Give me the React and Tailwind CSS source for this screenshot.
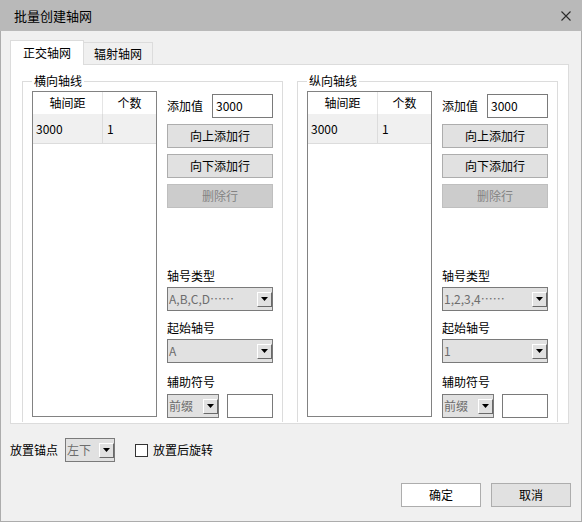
import React from "react";

function DropArrow() {
  return (
    <span className="flex h-[15px] w-[15px] shrink-0 items-center justify-center border border-t-white border-l-white border-r-[#696969] border-b-[#696969] bg-[#e1e1e1]">
      <svg width="7" height="4" viewBox="0 0 7 4">
        <path d="M0 0h7L3.5 4z" fill="#000" />
      </svg>
    </span>
  );
}

function Combo({ value, className = "" }) {
  return (
    <div className={`flex h-[24px] items-center justify-between border border-[#7a7a7a] bg-[#e1e1e1] pl-px ${className}`}>
      <span className="leading-[16px] text-[#6d6d6d]">{value}</span>
      <DropArrow />
    </div>
  );
}

function Btn({ children, disabled }) {
  if (disabled) {
    return (
      <div className="flex h-[24px] items-center justify-center border border-[#bfbfbf] bg-[#cccccc] text-[#838383]">
        {children}
      </div>
    );
  }
  return (
    <div className="flex h-[24px] items-center justify-center border border-[#adadad] bg-[#e1e1e1]">
      {children}
    </div>
  );
}

// series label: e.g. "A,B,C,D" followed by a centred full-width ellipsis
function Series({ text }) {
  return (
    <>
      {text}
      <span lang="zh-CN" className="inline-block [font-feature-settings:'fwid']">……</span>
    </>
  );
}

function AxisGroup({ title, typeValue, startValue }) {
  return (
    <div className="relative h-[341px] w-[261px] border-l border-r border-t border-[#dcdcdc]">
      <span className="absolute -top-[9px] left-[9px] bg-white px-[2px] leading-[16px]">{title}</span>
      <div className="ml-[9px] mt-[9px] flex">
        {/* list */}
        <div className="h-[326px] w-[125px] border border-[#828282] bg-white">
          <div className="flex h-[22px] items-center">
            <div className="flex h-full w-[70px] items-center justify-center border-r border-[#e5e5e5]">轴间距</div>
            <div className="flex-1 text-center">个数</div>
          </div>
          <div className="flex h-[30px] items-center border-b border-[#dcdcdc] bg-[#f0f0f0]">
            <div className="flex h-full w-[70px] items-center border-r border-[#dcdcdc] pl-[3px]">3000</div>
            <div className="pl-[4px]">1</div>
          </div>
        </div>

        <div className="ml-[10px] flex w-[106px] flex-col">
          <div className="mt-[3px] flex h-[24px] items-center justify-between">
            <span>添加值</span>
            <div className="flex h-[24px] w-[61px] items-center border border-[#7a7a7a] bg-white pl-[3px]">3000</div>
          </div>
          <div className="mt-[6px]">
            <Btn>向上添加行</Btn>
          </div>
          <div className="mt-[6px]">
            <Btn>向下添加行</Btn>
          </div>
          <div className="mt-[6px]">
            <Btn disabled>删除行</Btn>
          </div>

          <div className="mt-[60px] leading-[16px]">轴号类型</div>
          <Combo value={typeValue} className="mt-[3px]" />
          <div className="mt-[9px] leading-[16px]">起始轴号</div>
          <Combo value={startValue} className="mt-[3px]" />
          <div className="mt-[11px] leading-[16px]">辅助符号</div>
          <div className="mt-[4px] flex items-center justify-between">
            <Combo value="前缀" className="w-[52px]" />
            <div className="h-[24px] w-[46px] border border-[#7a7a7a] bg-white" />
          </div>
        </div>
      </div>
    </div>
  );
}

export default function App() {
  return (
    <div className="flex h-[522px] w-[582px] flex-col bg-[#f0f0f0] font-['Noto_Sans_CJK_SC',sans-serif] text-[12px] text-black">
      {/* title bar */}
      <div className="flex h-[31px] shrink-0 items-center justify-between bg-[#b9b9b9] pl-[14px] pr-[11px]">
        <span className="text-[13px]">批量创建轴网</span>
        <svg width="10" height="10" viewBox="0 0 10 10">
          <path d="M0.5 0.5L9.5 9.5M9.5 0.5L0.5 9.5" stroke="#2b2b2b" strokeWidth="1.1" />
        </svg>
      </div>

      <div className="flex flex-1 flex-col border-b border-l border-r border-[#acacac] pt-[9px]">
        {/* tabs */}
        <div className="ml-[9px] flex h-[24px] items-end">
          <div className="relative z-10 -mb-px flex h-[25px] w-[74px] items-center justify-center border-l border-r border-t border-[#dcdcdc] bg-white">
            正交轴网
          </div>
          <div className="flex h-[22px] w-[69px] items-center justify-center border-r border-t border-[#dcdcdc] bg-[#f0f0f0]">
            辐射轴网
          </div>
        </div>

        {/* tab panel */}
        <div className="ml-[9px] flex h-[360px] w-[559px] gap-[14px] border border-[#dcdcdc] bg-white pl-[11px] pt-[16px]">
          <AxisGroup title="横向轴线" typeValue={<Series text="A,B,C,D" />} startValue="A" />
          <AxisGroup title="纵向轴线" typeValue={<Series text="1,2,3,4" />} startValue="1" />
        </div>

        {/* anchor row */}
        <div className="mt-[14px] flex h-[24px] items-center pl-[9px]">
          <span>放置锚点</span>
          <Combo value="左下" className="ml-[7px] w-[50px]" />
          <span className="ml-[20px] h-[13px] w-[13px] border border-[#333] bg-white" />
          <span className="ml-[5px]">放置后旋转</span>
        </div>

        {/* buttons */}
        <div className="mt-[21px] flex justify-end gap-[10px] pr-[10px]">
          <div className="flex h-[24px] w-[80px] items-center justify-center border border-[#adadad] bg-white">确定</div>
          <div className="flex h-[24px] w-[80px] items-center justify-center border border-[#adadad] bg-[#e1e1e1]">取消</div>
        </div>
      </div>
    </div>
  );
}
